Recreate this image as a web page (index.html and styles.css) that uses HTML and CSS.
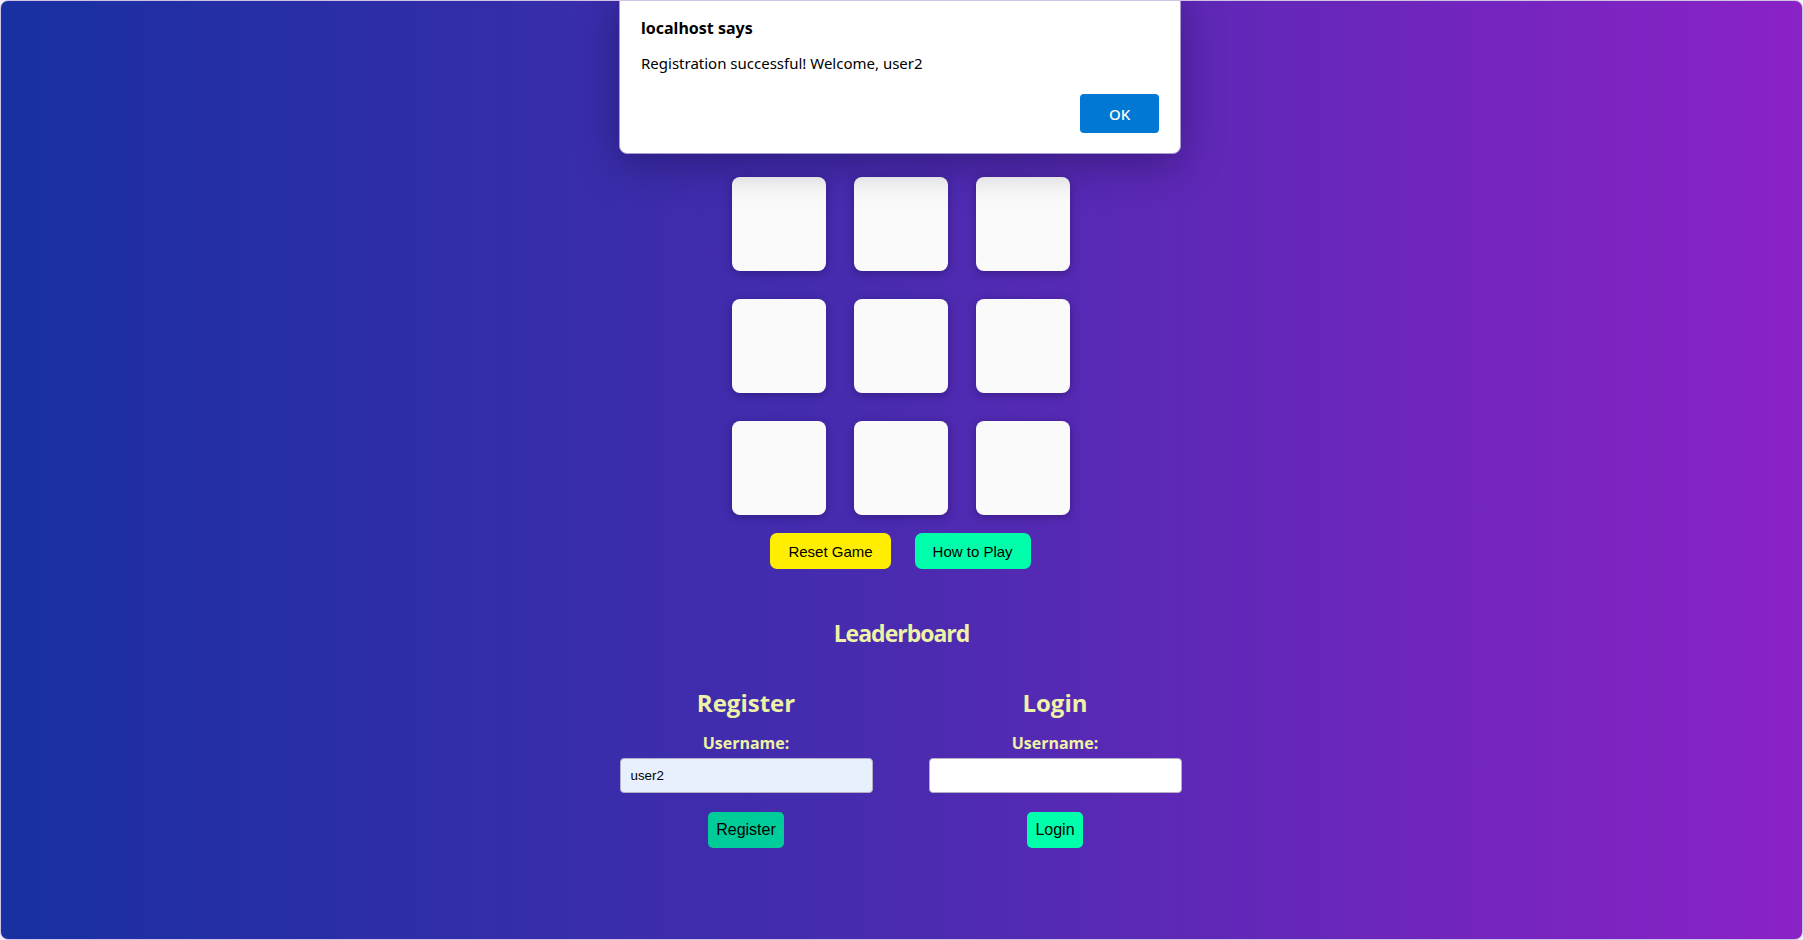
FILE: index.html
```html
<!DOCTYPE html>
<html lang="en">
<head>
<meta charset="utf-8">
<title>Tic Tac Toe</title>
<link rel="stylesheet" href="styles.css">
</head>
<body>
<div class="window">
  <main class="app">
    <div class="board">
      <div class="cell"></div><div class="cell"></div><div class="cell"></div>
      <div class="cell"></div><div class="cell"></div><div class="cell"></div>
      <div class="cell"></div><div class="cell"></div><div class="cell"></div>
    </div>
    <div class="controls">
      <button class="btn btn-reset">Reset Game</button>
      <button class="btn btn-help">How to Play</button>
    </div>
    <section class="leaderboard">
      <h2 class="heading heading-board">Leaderboard</h2>
    </section>
    <section class="auth">
      <form class="auth-form">
        <h2 class="heading">Register</h2>
        <label class="auth-label">Username:</label>
        <input class="auth-input autofilled" type="text" value="user2">
        <button type="button" class="auth-btn btn-register">Register</button>
      </form>
      <form class="auth-form">
        <h2 class="heading">Login</h2>
        <label class="auth-label">Username:</label>
        <input class="auth-input" type="text" value="">
        <button type="button" class="auth-btn btn-login">Login</button>
      </form>
    </section>
  </main>

  <div class="dialog" role="alertdialog">
    <div class="dialog-title">localhost says</div>
    <div class="dialog-msg">Registration successful! Welcome, user2</div>
    <div class="dialog-actions">
      <button class="dialog-ok">OK</button>
    </div>
  </div>
</div>
</body>
</html>
```
FILE: styles.css
```css
* { box-sizing: border-box; }

html, body {
  margin: 0;
  padding: 0;
  height: 100%;
}

body {
  background: #f4f0fa;
  overflow: hidden;
}

.window {
  position: relative;
  height: 940px;
  width: 1803px;
  border: 1px solid #cfc4e6;
  border-radius: 8px;
  overflow: hidden;
  background: linear-gradient(to right, #1830a0 0%, #4a2bb0 50%, #8a22c6 100%);
}

.app {
  display: flex;
  flex-direction: column;
  align-items: center;
  padding-top: 176px;
  font-family: "Comic Sans MS", "Open Sans", sans-serif;
}

.board {
  display: grid;
  grid-template-columns: repeat(3, 94px);
  grid-auto-rows: 94px;
  gap: 28px;
  transform: translateX(-1px);
}

.cell {
  background: #fafafa;
  border-radius: 8px;
  box-shadow: 0 2px 8px rgba(20, 0, 60, 0.35);
}

.controls {
  display: flex;
  gap: 24px;
  margin-top: 18px;
  transform: translateX(-1px);
}

.btn {
  font-family: "Liberation Sans", Arial, sans-serif;
  font-size: 15px;
  height: 36px;
  padding: 0 18px;
  border: none;
  border-radius: 7px;
  color: #000;
}

.btn-reset { background: #ffee00; }
.btn-help { background: #00ffaa; }

.heading {
  margin: 0;
  font-family: "Comic Sans MS", "Open Sans", sans-serif;
  font-weight: 700;
  font-size: 24px;
  line-height: 32px;
  color: #eef2a6;
  text-align: center;
}

.heading-board {
  font-size: 23px;
  letter-spacing: -1px;
}

.leaderboard {
  margin-top: 48px;
}

.auth {
  display: flex;
  gap: 56px;
  margin-top: 38px;
  transform: translateX(-1px);
}

.auth-form {
  width: 253px;
  display: flex;
  flex-direction: column;
  align-items: center;
  margin: 0;
}

.auth-label {
  margin-top: 14px;
  font-family: "Comic Sans MS", "Open Sans", sans-serif;
  font-weight: 700;
  font-size: 16px;
  line-height: 20px;
  color: #eef2a6;
}

.auth-input {
  margin-top: 5px;
  width: 253px;
  height: 35px;
  border: 1px solid #b4b0c4;
  border-radius: 4px;
  padding: 0 10px;
  font-family: "Liberation Sans", Arial, sans-serif;
  font-size: 13.33px;
  color: #000;
  background: #fff;
}

.auth-input.autofilled { background: #e8f0fe; }

.auth-btn {
  margin-top: 19px;
  height: 36px;
  padding: 0 8px;
  border: none;
  border-radius: 5px;
  font-family: "Liberation Sans", Arial, sans-serif;
  font-size: 16px;
  color: #000;
}

.btn-register { background: #00cc99; }
.btn-login { background: #00ffaa; }

/* Browser alert dialog overlay */
.dialog {
  position: absolute;
  top: -10px;
  left: 618px;
  width: 562px;
  padding: 25px 21px 20px 21px;
  background: #fff;
  border: 1px solid #a89ccc;
  border-radius: 8px;
  box-shadow: 0 10px 40px rgba(10, 0, 40, 0.35);
  font-family: "Noto Sans", "Open Sans", sans-serif;
  color: #000;
}

.dialog-title {
  font-weight: 700;
  font-size: 16px;
  line-height: 22px;
}

.dialog-msg {
  margin-top: 14px;
  font-size: 15px;
  line-height: 20px;
}

.dialog-actions {
  display: flex;
  justify-content: flex-end;
  margin-top: 21px;
}

.dialog-ok {
  width: 79px;
  height: 39px;
  border: none;
  border-radius: 4px;
  background: #0078d4;
  color: #fff;
  font-family: "Noto Sans", "Open Sans", sans-serif;
  font-weight: 500;
  font-size: 15px;
}
```
